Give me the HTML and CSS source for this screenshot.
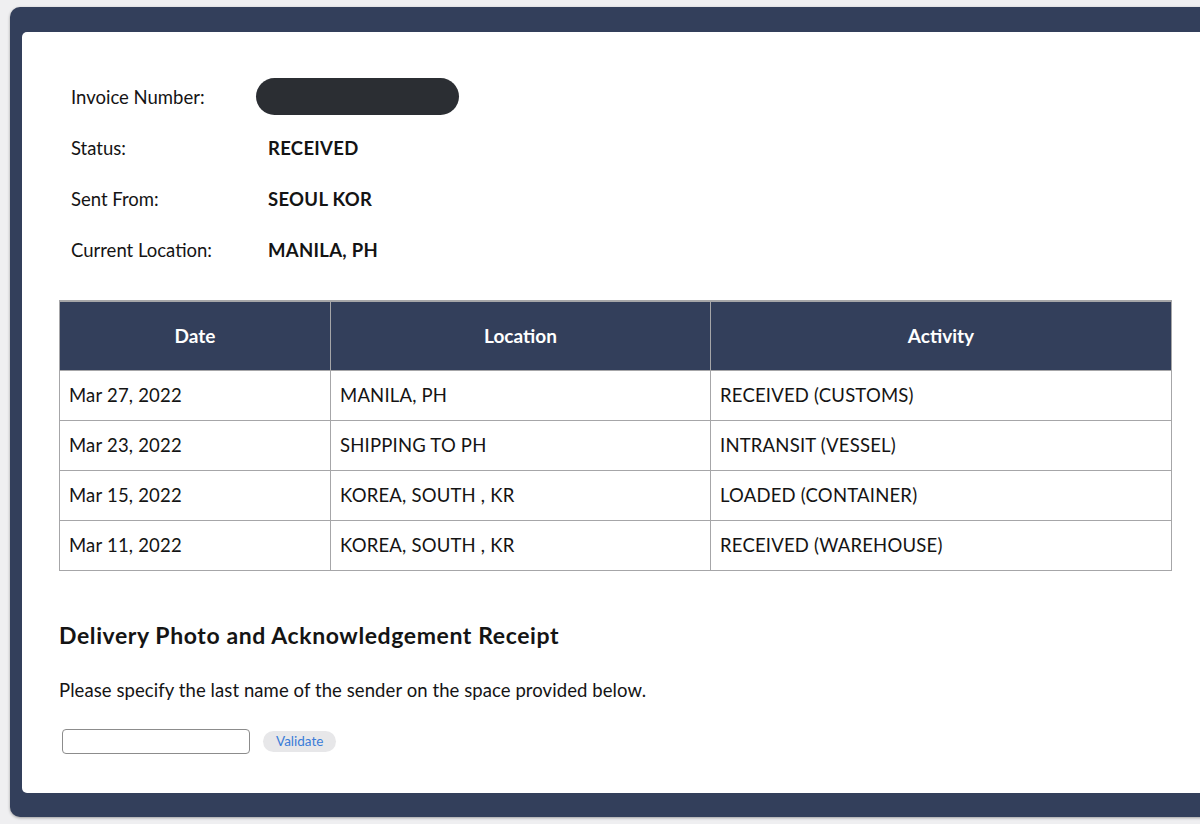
FILE: index.html
```html
<!DOCTYPE html>
<html lang="en">
<head>
<meta charset="utf-8">
<title>Shipment Tracking</title>
<link rel="stylesheet" href="styles.css">
</head>
<body>
<div class="frame">
  <main class="card">
    <section class="summary">
      <div class="label">Invoice Number:</div>
      <div class="value"><span class="redacted"></span></div>
      <div class="label">Status:</div>
      <div class="value strong">RECEIVED</div>
      <div class="label">Sent From:</div>
      <div class="value strong">SEOUL KOR</div>
      <div class="label">Current Location:</div>
      <div class="value strong">MANILA, PH</div>
    </section>

    <table class="history">
      <thead>
        <tr>
          <th class="col-date">Date</th>
          <th class="col-loc">Location</th>
          <th class="col-act">Activity</th>
        </tr>
      </thead>
      <tbody>
        <tr><td>Mar 27, 2022</td><td>MANILA, PH</td><td>RECEIVED (CUSTOMS)</td></tr>
        <tr><td>Mar 23, 2022</td><td>SHIPPING TO PH</td><td>INTRANSIT (VESSEL)</td></tr>
        <tr><td>Mar 15, 2022</td><td>KOREA, SOUTH , KR</td><td>LOADED (CONTAINER)</td></tr>
        <tr><td>Mar 11, 2022</td><td>KOREA, SOUTH , KR</td><td>RECEIVED (WAREHOUSE)</td></tr>
      </tbody>
    </table>

    <section class="receipt">
      <h2 class="receipt-title">Delivery Photo and Acknowledgement Receipt</h2>
      <p class="receipt-note">Please specify the last name of the sender on the space provided below.</p>
      <form class="validate-form">
        <input class="name-input" type="text">
        <button class="validate-btn" type="button">Validate</button>
      </form>
    </section>
  </main>
</div>
</body>
</html>
```

FILE: styles.css
```css
html, body {
  margin: 0;
  padding: 0;
}

body {
  background: #efeff1;
  overflow: hidden;
  width: 1200px;
  height: 824px;
  font-family: Lato, "Noto Sans", sans-serif;
  color: #141414;
}

.frame {
  margin: 7px -60px 0 10px;
  height: 810px;
  box-sizing: border-box;
  padding: 25px 0 24px 12px;
  background: #333f5b;
  border-radius: 10px;
  box-shadow: 0 1px 3px rgba(0, 0, 0, 0.35);
}

.card {
  height: 100%;
  box-sizing: border-box;
  background: #ffffff;
  border-radius: 5px 0 0 5px;
  padding: 39px 0 0 37px;
}

/* shipment summary */
.summary {
  display: grid;
  grid-template-columns: 197px 300px;
  grid-auto-rows: 51px;
  align-items: center;
  padding-left: 12px;
  font-size: 18.5px;
}

.label {
  font-weight: 400;
}

.value.strong {
  font-weight: 700;
  letter-spacing: 0.3px;
}

.redacted {
  display: block;
  margin-left: -12px;
  width: 203px;
  height: 37px;
  border-radius: 19px;
  background: #2b2e33;
}

/* tracking history */
.history {
  margin-top: 25px;
  width: 1113px;
  border-collapse: collapse;
  table-layout: fixed;
  font-size: 18.5px;
}

.col-date { width: 271px; }
.col-loc { width: 380px; }

.history th,
.history td {
  border: 1px solid #a6a6a8;
  box-sizing: border-box;
}

.history th {
  height: 69px;
  padding: 0;
  background: #333f5b;
  color: #ffffff;
  font-weight: 700;
  font-size: 19px;
  text-align: center;
  border-top-width: 2px;
}

.history td {
  height: 50px;
  padding: 0 0 0 9px;
  text-align: left;
  font-weight: 400;
  letter-spacing: 0.2px;
}

/* acknowledgement receipt */
.receipt-title {
  margin: 49px 0 0;
  line-height: 30px;
  font-size: 23px;
  font-weight: 700;
  letter-spacing: 0.6px;
}

.receipt-note {
  margin: 28px 0 0;
  line-height: 24px;
  font-size: 18.5px;
  letter-spacing: 0.08px;
}

.validate-form {
  display: flex;
  align-items: center;
  gap: 13px;
  margin: 27px 0 0 3px;
}

.name-input {
  width: 188px;
  height: 25px;
  box-sizing: border-box;
  border: 1px solid #8c8c8c;
  border-radius: 4px;
  background: #ffffff;
  margin: 0;
}

.validate-btn {
  height: 21px;
  padding: 0 13px;
  border: none;
  border-radius: 11px;
  background: #e7e7e9;
  color: #3a7cd8;
  font-family: Lato, "Noto Sans", sans-serif;
  font-size: 13.5px;
}
```
